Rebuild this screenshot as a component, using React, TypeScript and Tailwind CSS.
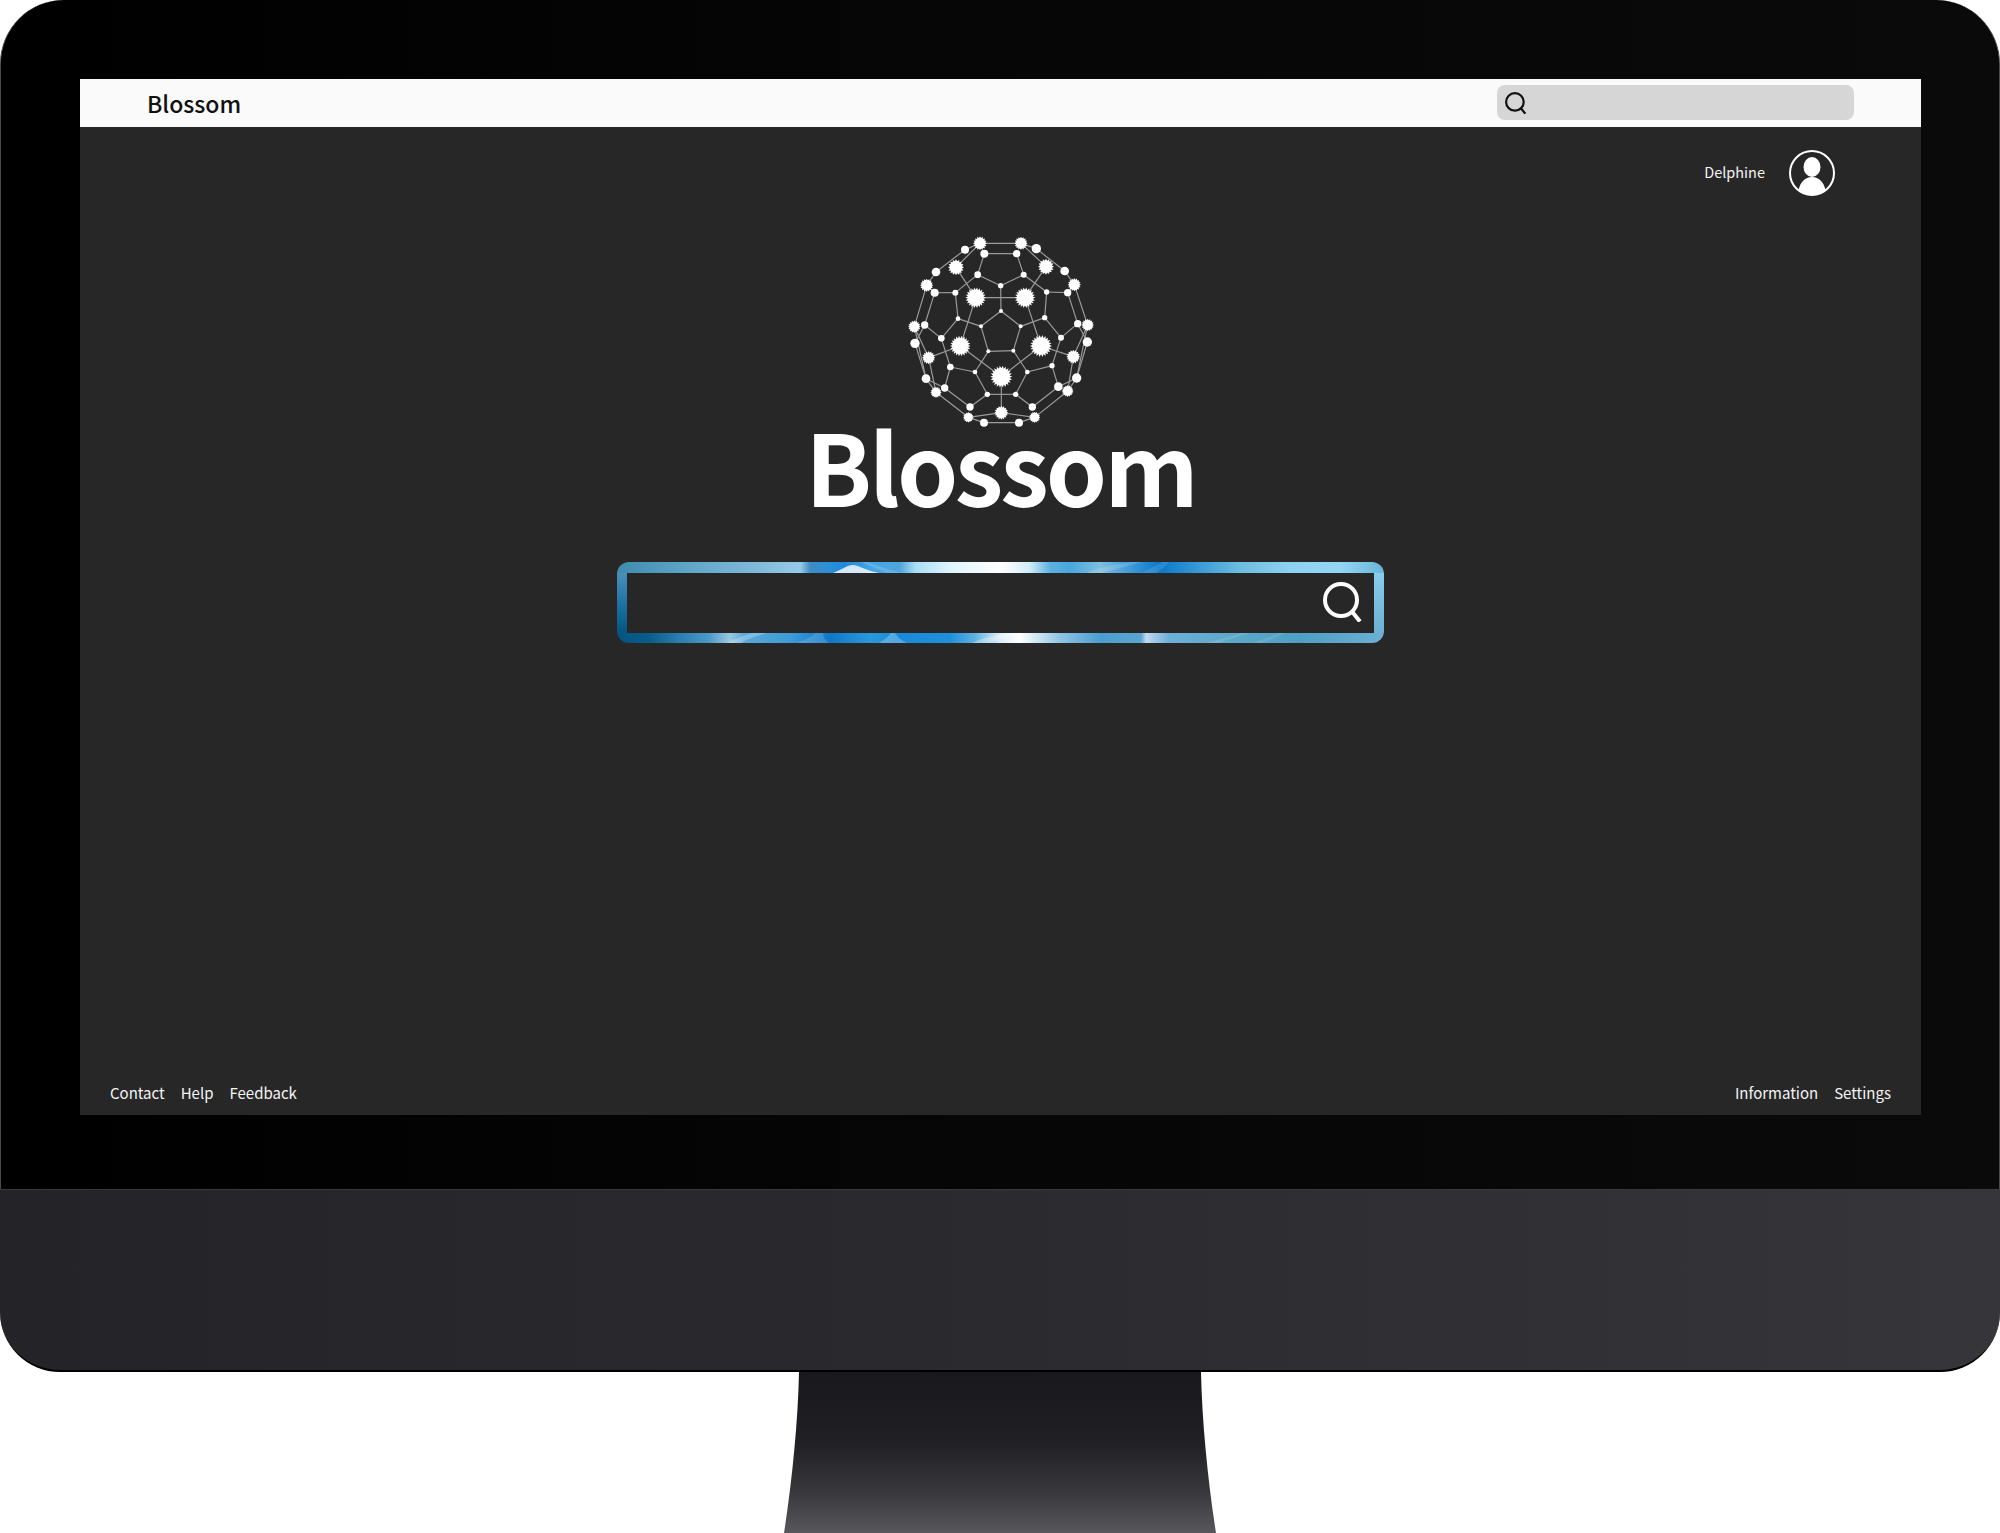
const big: [number, number, number][] = [
  [344, 263, 31], [492, 263, 31], [298, 408, 31], [540, 408, 33], [421, 500, 33],
  [285, 172, 24], [555, 170, 24], [357, 100, 21], [480, 100, 20], [197, 226, 20],
  [640, 224, 20], [160, 350, 19], [680, 345, 19], [203, 443, 20], [637, 440, 21],
  [225, 547, 17], [620, 543, 18], [322, 622, 16], [521, 622, 17], [421, 608, 21],
];

const nodes: Record<string, [number, number, number]> = {
  A: [344, 263, 0], B: [492, 263, 0], C: [298, 408, 0], D: [540, 408, 0], E: [421, 500, 0],
  F: [285, 172, 0], G: [555, 170, 0], H: [357, 100, 0], I: [480, 100, 0], J: [197, 226, 0],
  K: [640, 224, 0], L: [160, 350, 0], M: [680, 345, 0], N: [203, 443, 0], O: [637, 440, 0],
  P: [225, 547, 0], Q: [620, 543, 0], R: [322, 622, 0], S: [521, 622, 0], T: [421, 608, 0],
  a: [312, 119, 12], b: [526, 116, 14], c: [370, 131, 12], d: [467, 131, 11], e: [225, 186, 13],
  f: [611, 183, 13], g: [221, 248, 12], h: [620, 248, 11], i: [191, 345, 11], j: [650, 341, 11],
  k: [162, 400, 14], l: [679, 396, 14], m: [195, 506, 13], n: [647, 504, 14], o: [251, 534, 11],
  p: [592, 530, 13], q: [369, 638, 12], r: [474, 638, 12], s: [327, 591, 11], t: [514, 591, 11],
  u: [350, 194, 10], v: [488, 194, 9], w: [419, 227, 8], x: [283, 248, 9], y: [557, 246, 8],
  z: [420, 303, 6], aa: [291, 326, 7], ab: [551, 323, 8], ac: [360, 349, 6], ad: [479, 349, 6],
  ae: [241, 385, 10], af: [600, 383, 9], ag: [382, 424, 6], ah: [457, 422, 6], ai: [268, 471, 10],
  aj: [573, 467, 8], ak: [342, 486, 7], al: [499, 486, 7], am: [379, 553, 8], an: [464, 553, 8],
};

const edges =
  "z-ac z-ad ac-ag ad-ah ag-ah z-w w-u w-v A-B ac-aa ad-ab aa-x ab-y x-g y-h u-c v-d c-d H-I H-a I-b " +
  "F-A G-B u-x v-y A-C B-D C-E D-E ag-ak ah-al ak-ai al-aj ai-ae aj-af ae-aa af-ab ae-i af-j ai-o aj-p " +
  "ak-am al-an am-an am-s an-t E-T T-R T-S o-m p-n C-N D-O N-L O-M a-e b-f H-F I-G e-J f-K g-J h-K " +
  "J-L K-M g-i h-j i-k j-l k-m l-n m-P n-Q P-R Q-S o-s p-t R-q S-r q-r L-m M-n N-P O-Q";

function spikes(cx: number, cy: number, r: number) {
  const pts: string[] = [];
  const n = r > 25 ? 22 : 16;
  for (let i = 0; i < n * 2; i++) {
    const rad = i % 2 === 0 ? r : r * 0.76;
    const t = (i * Math.PI) / n;
    pts.push(`${cx + rad * Math.cos(t)},${cy + rad * Math.sin(t)}`);
  }
  return pts.join(" ");
}

function BallLogo() {
  return (
    <svg viewBox="0 0 840 720" className="w-[280px] h-[240px] block">
      {edges.split(" ").map((edge) => {
        const [from, to] = edge.split("-");
        return (
          <line
            key={edge}
            x1={nodes[from][0]}
            y1={nodes[from][1]}
            x2={nodes[to][0]}
            y2={nodes[to][1]}
            stroke="#9c9c9c"
            strokeWidth="3.5"
          />
        );
      })}
      {Object.entries(nodes)
        .filter(([, node]) => node[2] > 0)
        .map(([name, node]) => (
          <circle key={name} cx={node[0]} cy={node[1]} r={node[2]} fill="#ffffff" />
        ))}
      {big.map(([x, y, r]) => (
        <polygon key={`${x}-${y}`} points={spikes(x, y, r)} fill="#ffffff" />
      ))}
    </svg>
  );
}

function SearchGlyph({ className, stroke }: { className: string; stroke: string }) {
  return (
    <svg viewBox="0 0 40 40" className={className} fill="none" stroke={stroke}>
      <circle cx="18" cy="18" r="16" strokeWidth="4" />
      <path d="M28.5 29 L37 39.5" strokeWidth="4" />
    </svg>
  );
}

function Avatar() {
  return (
    <svg viewBox="0 0 46 46" className="w-[46px] h-[46px]">
      <defs>
        <clipPath id="avatar-clip">
          <circle cx="23" cy="23" r="22" />
        </clipPath>
      </defs>
      <circle cx="23" cy="23" r="22" fill="none" stroke="#ffffff" strokeWidth="2" />
      <g clipPath="url(#avatar-clip)" fill="#ffffff">
        <ellipse cx="23" cy="17" rx="8.5" ry="10" />
        <path d="M9 46 C9 34 15 27 23 27 C31 27 37 34 37 46 Z" />
      </g>
    </svg>
  );
}

// light streaks on the blue ring, drawn over the gradient strips
function RingWisps() {
  return (
    <svg viewBox="0 0 767 81" className="absolute inset-0 w-[767px] h-[81px] pointer-events-none">
      <g fill="#ffffff">
        <path d="M216 11 C224 8 230 3 236 3 C241 3 250 9 262 11 Z" opacity="0.8" />
        <path d="M250 0 C262 4 272 8 285 11 L270 11 C262 8 254 4 244 0 Z" opacity="0.15" />
        <path d="M470 11 C480 6 495 3 515 0 L525 0 C510 4 495 8 485 11 Z" opacity="0.15" />
        <path d="M525 11 C535 6 540 3 545 0 L552 0 C548 4 545 8 540 11 Z" opacity="0.12" />
        <path d="M372 0 C384 3 392 6 405 11 L385 11 C378 7 372 3 364 0 Z" opacity="0.15" />
        <path d="M110 81 C120 76 128 73 135 71 L150 71 C140 74 130 77 124 81 Z" opacity="0.25" />
        <path d="M180 81 C190 77 196 74 198 71 L206 71 C206 75 208 78 212 81 Z" opacity="0.15" />
        <path d="M262 81 C268 77 272 74 274 71 L278 71 C280 75 284 78 290 81 Z" opacity="0.25" />
        <path d="M355 81 C365 76 380 73 395 71 L410 71 C395 74 382 77 372 81 Z" opacity="0.3" />
        <path d="M590 81 C600 78 615 74 624 71 L632 71 C622 74 610 78 602 81 Z" opacity="0.12" />
        <path d="M636 81 C645 77 655 74 662 71 L668 71 C660 75 652 78 646 81 Z" opacity="0.1" />
      </g>
    </svg>
  );
}

export default function App() {
  return (
    <div className="w-[2000px] h-[1533px] bg-white flex flex-col items-center overflow-hidden font-['Noto_Sans_CJK_KR','Noto_Sans',sans-serif]">
      {/* bezel */}
      <div className="w-full h-[1189px] shrink-0 bg-[linear-gradient(90deg,#000000,#060606_50%,#0a0a0a)] rounded-t-[64px] border-x border-[#4a4a4a] pt-[79px] pl-[79px] pr-[78px]">
        <div className="h-[1036px] bg-[#272727] flex flex-col">
          <div className="h-[48px] shrink-0 bg-[#fafafa] flex items-center justify-between pl-[67px] pr-[67px]">
            <span className="text-[23px] font-medium text-[#111111] leading-none">Blossom</span>
            <div className="w-[357px] h-[35px] mb-[1px] rounded-[8px] bg-[#d6d6d6] flex items-center pl-[8px]">
              <SearchGlyph className="w-[22px] h-[22px]" stroke="#111111" />
            </div>
          </div>

          <div className="flex items-center justify-end gap-[24px] pr-[86px] pt-[23px]">
            <span className="text-[14.5px] text-[#f4f4f4] leading-none -mt-[2px]">Delphine</span>
            <Avatar />
          </div>

          <div className="flex flex-col items-center mt-[14px]">
            <BallLogo />
            <h1 className="text-[98px] font-bold tracking-[-3px] text-white leading-none -mt-[35px]">Blossom</h1>

            {/* main search box */}
            <div className="relative w-[767px] h-[81px] mt-[49px] rounded-[12px] overflow-hidden flex flex-col">
              <div className="h-[11px] bg-[linear-gradient(90deg,#3d8bae_0%,#5ba3c6_8.2%,#82bbd9_18.6%,#95cbe7_23.9%,#3f8cc4_25.2%,#2a8fd8_27.8%,#1e88dc_29.7%,#45a5e4_33%,#4fa6dd_36.9%,#a8def5_38.9%,#dff5ff_43.4%,#ffffff_50%,#d0eef8_53.8%,#5cb0e0_56.5%,#48a6de_59%,#7fbfe0_63%,#3f9ad8_66.9%,#0a78c8_70.8%,#2d92d4_74.7%,#6dbde0_81.2%,#8dd2f0_87.7%,#92d6f4_94.3%,#6ab4d8_100%)]" />
              <div className="flex-1 flex">
                <div className="w-[10px] bg-[linear-gradient(180deg,#4a90b8,#1f74a4_50%,#04547e)]" />
                <div className="flex-1 bg-[#272727] rounded-[4px] flex items-center justify-end pr-[11px] pb-[3px]">
                  <SearchGlyph className="w-[40px] h-[40px]" stroke="#ffffff" />
                </div>
                <div className="w-[10px] bg-[linear-gradient(180deg,#88cdec,#6cb0d2)]" />
              </div>
              <div className="h-[10px] bg-[linear-gradient(90deg,#04547e_0%,#0a5e8c_4.3%,#2a7fb0_8.2%,#4a9ac8_12%,#9ac8e0_14.7%,#5aa8d8_16.6%,#3e9cd8_22.5%,#0f78c8_27.8%,#2a98dc_33%,#1a8ad8_36.9%,#1f90dc_43.4%,#5eb0e0_46.6%,#e0f0f8_50%,#ffffff_52.5%,#90c4e4_57.8%,#4a9ed0_63%,#5aa6d0_68.3%,#c0d8f0_69%,#6cb0d8_72%,#5aa8c8_81.2%,#4da0c4_89%,#6cb0d2_100%)]" />
              <RingWisps />
            </div>
          </div>

          <div className="mt-auto flex items-center justify-between px-[30px] pb-[10px] text-[15px] leading-[24px] text-[#f4f4f4]">
            <div className="flex gap-[16px]">
              <span>Contact</span>
              <span>Help</span>
              <span>Feedback</span>
            </div>
            <div className="flex gap-[16px]">
              <span>Information</span>
              <span>Settings</span>
            </div>
          </div>
        </div>
      </div>

      {/* chin */}
      <div className="w-full h-[183px] shrink-0 rounded-b-[60px] bg-[linear-gradient(90deg,#232328,#2a2a2f_50%,#35353a)] border-t border-[#3a3a3e] border-b-2 border-b-black" />

      {/* stand */}
      <svg viewBox="0 0 432 161" className="w-[432px] h-[161px] shrink-0 block">
        <defs>
          <linearGradient id="stand-fill" x1="0" y1="0" x2="0" y2="1">
            <stop offset="0" stopColor="#19191d" />
            <stop offset="0.45" stopColor="#212125" />
            <stop offset="0.75" stopColor="#39393d" />
            <stop offset="1" stopColor="#57575c" />
          </linearGradient>
        </defs>
        <path d="M15 0 L417 0 C418 50 424 110 432 161 L0 161 C8 110 14 50 15 0 Z" fill="url(#stand-fill)" />
      </svg>
    </div>
  );
}
